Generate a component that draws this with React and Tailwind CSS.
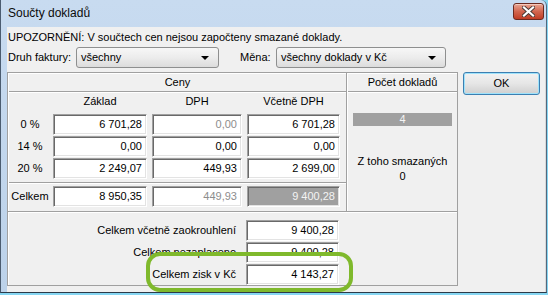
const ui = "font-['Liberation_Sans',Arial,sans-serif] text-[11px] leading-[13px] text-black"

const Field = ({ value, className = '', tone = 'normal' }) => {
  const tones = {
    normal: 'bg-white text-black',
    disabled: 'bg-white text-[#8d8d8d]',
    dark: 'bg-[#a0a0a0] text-[#f4f4f4]',
  }
  return (
    <div
      className={`h-[21px] flex items-center justify-end pr-[4px] border border-t-[#a0a0a0] border-l-[#a0a0a0] border-r-white border-b-white shadow-[inset_1px_1px_0_#696969,inset_-1px_-1px_0_#e3e3e3] ${tones[tone]} ${className}`}
    >
      {value}
    </div>
  )
}

const Etch = ({ className = '' }) => (
  <div className={`h-[2px] border-t border-[#a0a0a0] bg-white ${className}`} />
)

const Combo = ({ value, className = '' }) => (
  <div
    className={`h-[21px] flex items-center justify-between pl-[4px] pr-[9px] rounded-[3px] border border-[#8e8f8f] bg-gradient-to-b from-[#f7f7f7] via-[#ececec] to-[#dcdcdc] ${className}`}
  >
    <span>{value}</span>
    <svg width="8" height="4" viewBox="0 0 8 4">
      <path d="M0 0 H8 L4 4 Z" fill="#000" />
    </svg>
  </div>
)

const rows = [
  { label: '0 %', zaklad: '6 701,28', dph: '0,00', dphTone: 'disabled', celkem: '6 701,28' },
  { label: '14 %', zaklad: '0,00', dph: '0,00', dphTone: 'normal', celkem: '0,00' },
  { label: '20 %', zaklad: '2 249,07', dph: '449,93', dphTone: 'normal', celkem: '2 699,00' },
]

const totals = [
  { label: 'Celkem včetně zaokrouhlení', value: '9 400,28' },
  { label: 'Celkem nezaplaceno', value: '9 400,28' },
  { label: 'Celkem zisk v Kč', value: '4 143,27' },
]

export default function App() {
  return (
    <div className={`relative w-[548px] h-[295px] bg-[#86d6f2] ${ui}`}>
      <div className="w-[547px] h-[293px] flex flex-col border-l border-r border-b border-l-[#4b5c70] border-r-[#52687e] border-b-[#2c3a48] rounded-tr-[6px] bg-gradient-to-b from-[#c8dbf0] to-[#bcd2ea]">
        {/* title bar */}
        <div className="h-[27px] flex items-center justify-between pl-[7px] pr-[2px]">
          <span className="font-['Liberation_Sans',Arial,sans-serif] text-[12px] text-[#0b0b0b] -mt-[1px]">
            Součty dokladů
          </span>
          <div className="mb-[4px] w-[31px] h-[17px] flex items-center justify-center rounded-[3px] border border-[#6b2a20] bg-gradient-to-b from-[#e8a593] via-[#d2664f] to-[#c03c24] shadow-[inset_0_1px_0_#f4c9bc]">
            <svg width="13" height="11" viewBox="0 0 13 11">
              <path d="M2 1.5 L11 9.5 M11 1.5 L2 9.5" stroke="#4a3a36" strokeWidth="4" strokeLinecap="square" />
              <path d="M2 1.5 L11 9.5 M11 1.5 L2 9.5" stroke="#ffffff" strokeWidth="2.2" strokeLinecap="square" />
            </svg>
          </div>
        </div>

        {/* client */}
        <div className="flex-1 flex pl-[6px]">
          <div className="flex-1 flex flex-col bg-[#f0f0f0] border-r border-[#d9d9d9] pt-[3px]">
            <div className="pl-[1px] leading-[14px]">
              UPOZORNĚNÍ: V součtech cen nejsou započteny smazané doklady.
            </div>

            <div className="mt-[3px] flex items-center pl-[1px]">
              <span className="w-[68px]">Druh faktury:</span>
              <Combo value="všechny" className="w-[143px]" />
              <span className="ml-[21px] w-[36px]">Měna:</span>
              <Combo value="všechny doklady v Kč" className="w-[170px]" />
            </div>

            <div className="mt-[4px] flex items-start">
              {/* main panel */}
              <div className="w-[451px] h-[214px] flex flex-col border border-[#a0a0a0] shadow-[inset_1px_1px_0_#ffffff]">
                <div className="flex h-[138px]">
                  {/* Ceny */}
                  <div className="w-[338px] flex flex-col pl-[1px]">
                    <div className="h-[18px] flex items-center justify-center">Ceny</div>
                    <Etch />
                    <div className="h-[16px] flex items-center pl-[44px]">
                      <span className="w-[94px] text-center">Základ</span>
                      <span className="ml-[5px] w-[90px] text-center">DPH</span>
                      <span className="ml-[5px] w-[93px] text-center">Včetně DPH</span>
                    </div>
                    <div className="mt-[5px] flex flex-col gap-[1px]">
                      {rows.map((r) => (
                        <div key={r.label} className="flex items-center">
                          <span className="w-[42px] text-center">{r.label}</span>
                          <Field value={r.zaklad} className="ml-[2px] w-[94px]" />
                          <Field value={r.dph} tone={r.dphTone} className="ml-[5px] w-[90px]" />
                          <Field value={r.celkem} className="ml-[5px] w-[93px]" />
                        </div>
                      ))}
                    </div>
                    <Etch className="mt-[3px]" />
                    <div className="mt-[2px] flex items-center">
                      <span className="w-[42px] text-center">Celkem</span>
                      <Field value="8 950,35" className="ml-[2px] w-[94px]" />
                      <Field value="449,93" tone="disabled" className="ml-[5px] w-[90px]" />
                      <Field value="9 400,28" tone="dark" className="ml-[5px] w-[93px]" />
                    </div>
                  </div>

                  <div className="w-[2px] border-l border-[#a0a0a0] bg-white" />

                  {/* Počet dokladů */}
                  <div className="flex-1 flex flex-col">
                    <div className="h-[18px] flex items-center justify-center">Počet dokladů</div>
                    <Etch />
                    <div className="mt-[20px] mx-[5px] h-[13px] bg-[#a0a0a0] text-[#f4f4f4] flex items-center justify-center">
                      4
                    </div>
                    <div className="mt-[28px] text-center leading-[15px]">
                      Z toho smazaných
                      <br />0
                    </div>
                  </div>
                </div>

                <Etch />

                <div className="mt-[7px] flex flex-col gap-[1px]">
                  {totals.map((t) => (
                    <div key={t.label} className="flex items-center">
                      <span className="w-[228px] text-right">{t.label}</span>
                      <Field value={t.value} className="ml-[10px] w-[93px]" />
                    </div>
                  ))}
                </div>
              </div>

              {/* OK button */}
              <button className="ml-[5px] w-[77px] h-[23px] rounded-[3px] border border-[#3c7fb1] shadow-[inset_0_0_0_1px_#9ee2fb] bg-gradient-to-b from-[#f2f2f2] via-[#e6e6e6] to-[#cfcfcf] text-[11px] text-black">
                OK
              </button>
            </div>
          </div>
        </div>
      </div>

      {/* highlight drawn over the screenshot */}
      <div className="absolute left-[146px] top-[252px] w-[207px] h-[40px] rounded-[14px] border-[4px] border-[#7fb92c]" />
    </div>
  )
}
